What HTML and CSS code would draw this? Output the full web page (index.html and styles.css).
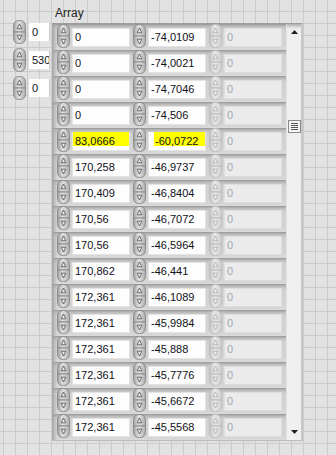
FILE: index.html
```html
<!DOCTYPE html>
<html>
<head>
<meta charset="utf-8">
<link rel="stylesheet" href="styles.css">
</head>
<body>
<svg class="defs" width="0" height="0">
  <defs>
    <linearGradient id="g1" x1="0" y1="0" x2="1" y2="0">
      <stop offset="0" stop-color="#9e9e9e"/>
      <stop offset="0.4" stop-color="#dedede"/>
      <stop offset="0.6" stop-color="#d6d6d6"/>
      <stop offset="1" stop-color="#a8a8a8"/>
    </linearGradient>
    <linearGradient id="g2" x1="0" y1="0" x2="1" y2="0">
      <stop offset="0" stop-color="#c4c4c4"/>
      <stop offset="0.45" stop-color="#e8e8e8"/>
      <stop offset="1" stop-color="#d0d0d0"/>
    </linearGradient>
    <symbol id="sp" viewBox="0 0 13 24">
      <path d="M0.5,12 V6.5 Q0.5,0.5 6.5,0.5 Q12.5,0.5 12.5,6.5 V12 Z" fill="url(#g1)" stroke="#8e8e8e"/>
      <path d="M0.5,12 V17.5 Q0.5,23.5 6.5,23.5 Q12.5,23.5 12.5,17.5 V12 Z" fill="url(#g1)" stroke="#8e8e8e"/>
      <path d="M6.5,4 L4.2,8.8 H8.8 Z" fill="#ededed" stroke="#4a4a4a" stroke-width="0.8"/>
      <path d="M4.2,15.2 H8.8 L6.5,20 Z" fill="#ededed" stroke="#4a4a4a" stroke-width="0.8"/>
    </symbol>
    <symbol id="spd" viewBox="0 0 13 24">
      <path d="M0.5,12 V6.5 Q0.5,0.5 6.5,0.5 Q12.5,0.5 12.5,6.5 V12 Z" fill="url(#g2)" stroke="#bdbdbd"/>
      <path d="M0.5,12 V17.5 Q0.5,23.5 6.5,23.5 Q12.5,23.5 12.5,17.5 V12 Z" fill="url(#g2)" stroke="#bdbdbd"/>
      <path d="M6.5,4 L4.2,8.8 H8.8 Z" fill="#efefef" stroke="#ababab" stroke-width="0.8"/>
      <path d="M4.2,15.2 H8.8 L6.5,20 Z" fill="#efefef" stroke="#ababab" stroke-width="0.8"/>
    </symbol>
  </defs>
</svg>
<div class="page">
  <div class="index-col">
    <div class="idx"><svg class="sp"><use href="#sp"/></svg><div class="ibox">0</div></div>
    <div class="idx"><svg class="sp"><use href="#sp"/></svg><div class="ibox">530</div></div>
    <div class="idx"><svg class="sp"><use href="#sp"/></svg><div class="ibox">0</div></div>
  </div>
  <div class="arr">
    <div class="label">Array</div>
    <div class="frame">
      <div class="rows">
        <div class="row"><svg class="sp"><use href="#sp"/></svg><div class="box">0</div><svg class="sp"><use href="#sp"/></svg><div class="box">-74,0109</div><svg class="sp"><use href="#spd"/></svg><div class="box dis">0</div></div>
        <div class="row"><svg class="sp"><use href="#sp"/></svg><div class="box">0</div><svg class="sp"><use href="#sp"/></svg><div class="box">-74,0021</div><svg class="sp"><use href="#spd"/></svg><div class="box dis">0</div></div>
        <div class="row"><svg class="sp"><use href="#sp"/></svg><div class="box">0</div><svg class="sp"><use href="#sp"/></svg><div class="box">-74,7046</div><svg class="sp"><use href="#spd"/></svg><div class="box dis">0</div></div>
        <div class="row"><svg class="sp"><use href="#sp"/></svg><div class="box">0</div><svg class="sp"><use href="#sp"/></svg><div class="box">-74,506</div><svg class="sp"><use href="#spd"/></svg><div class="box dis">0</div></div>
        <div class="row"><svg class="sp"><use href="#sp"/></svg><div class="box hlbox"><span class="hl">83,0666</span></div><svg class="sp"><use href="#sp"/></svg><div class="box hlbox"><span class="hl hl2">-60,0722</span></div><svg class="sp"><use href="#spd"/></svg><div class="box dis">0</div></div>
        <div class="row"><svg class="sp"><use href="#sp"/></svg><div class="box">170,258</div><svg class="sp"><use href="#sp"/></svg><div class="box">-46,9737</div><svg class="sp"><use href="#spd"/></svg><div class="box dis">0</div></div>
        <div class="row"><svg class="sp"><use href="#sp"/></svg><div class="box">170,409</div><svg class="sp"><use href="#sp"/></svg><div class="box">-46,8404</div><svg class="sp"><use href="#spd"/></svg><div class="box dis">0</div></div>
        <div class="row"><svg class="sp"><use href="#sp"/></svg><div class="box">170,56</div><svg class="sp"><use href="#sp"/></svg><div class="box">-46,7072</div><svg class="sp"><use href="#spd"/></svg><div class="box dis">0</div></div>
        <div class="row"><svg class="sp"><use href="#sp"/></svg><div class="box">170,56</div><svg class="sp"><use href="#sp"/></svg><div class="box">-46,5964</div><svg class="sp"><use href="#spd"/></svg><div class="box dis">0</div></div>
        <div class="row"><svg class="sp"><use href="#sp"/></svg><div class="box">170,862</div><svg class="sp"><use href="#sp"/></svg><div class="box">-46,441</div><svg class="sp"><use href="#spd"/></svg><div class="box dis">0</div></div>
        <div class="row"><svg class="sp"><use href="#sp"/></svg><div class="box">172,361</div><svg class="sp"><use href="#sp"/></svg><div class="box">-46,1089</div><svg class="sp"><use href="#spd"/></svg><div class="box dis">0</div></div>
        <div class="row"><svg class="sp"><use href="#sp"/></svg><div class="box">172,361</div><svg class="sp"><use href="#sp"/></svg><div class="box">-45,9984</div><svg class="sp"><use href="#spd"/></svg><div class="box dis">0</div></div>
        <div class="row"><svg class="sp"><use href="#sp"/></svg><div class="box">172,361</div><svg class="sp"><use href="#sp"/></svg><div class="box">-45,888</div><svg class="sp"><use href="#spd"/></svg><div class="box dis">0</div></div>
        <div class="row"><svg class="sp"><use href="#sp"/></svg><div class="box">172,361</div><svg class="sp"><use href="#sp"/></svg><div class="box">-45,7776</div><svg class="sp"><use href="#spd"/></svg><div class="box dis">0</div></div>
        <div class="row"><svg class="sp"><use href="#sp"/></svg><div class="box">172,361</div><svg class="sp"><use href="#sp"/></svg><div class="box">-45,6672</div><svg class="sp"><use href="#spd"/></svg><div class="box dis">0</div></div>
        <div class="row"><svg class="sp"><use href="#sp"/></svg><div class="box">172,361</div><svg class="sp"><use href="#sp"/></svg><div class="box">-45,5568</div><svg class="sp"><use href="#spd"/></svg><div class="box dis">0</div></div>
      </div>
      <div class="sbar">
        <svg class="arrow up" viewBox="0 0 7 4"><path d="M3.5,0 L7,4 H0 Z" fill="#1e1e1e"/></svg>
        <div class="thumb"><i></i><i></i><i></i><i></i></div>
        <div class="spacer"></div>
        <svg class="arrow down" viewBox="0 0 7 4"><path d="M0,0 H7 L3.5,4 Z" fill="#1e1e1e"/></svg>
      </div>
    </div>
  </div>
</div>
</body>
</html>
```

FILE: styles.css
```css
html, body {
  margin: 0;
  padding: 0;
}
body {
  width: 336px;
  height: 455px;
  overflow: hidden;
  background-color: #e2e2e2;
  background-image:
    linear-gradient(to right, #cbcbcb 1px, transparent 1px),
    linear-gradient(to bottom, #cbcbcb 1px, transparent 1px);
  background-size: 12px 12px;
  background-position: 3px 11px;
  font-family: "Liberation Sans", Arial, sans-serif;
  color: #101018;
}
.defs {
  display: block;
  width: 0;
  height: 0;
  overflow: hidden;
}
.page {
  display: flex;
  align-items: flex-start;
}
.index-col {
  width: 52px;
  box-sizing: border-box;
  padding: 18px 0 0 13px;
  display: flex;
  flex-direction: column;
}
.idx {
  height: 28px;
  display: flex;
  align-items: center;
  gap: 3px;
}
.sp {
  width: 13px;
  height: 24px;
  flex: none;
  display: block;
}
.ibox {
  width: 21px;
  height: 18px;
  box-sizing: border-box;
  background: #fff;
  border-right: 1px solid #c8c8c8;
  padding-left: 3px;
  font-size: 11px;
  line-height: 18px;
  white-space: nowrap;
  overflow: hidden;
}
.arr {
  width: 251px;
  display: flex;
  flex-direction: column;
}
.label {
  height: 23px;
  box-sizing: border-box;
  padding: 6px 0 0 3px;
  font-size: 12px;
  line-height: 14px;
  color: #262626;
}
.frame {
  display: flex;
  border-top: 1px solid #9c9c9c;
  border-right: 2px solid #c6c6c6;
  border-bottom: 1px solid #bcbcbc;
}
.rows {
  width: 234px;
  display: flex;
  flex-direction: column;
}
.row {
  height: 26px;
  box-sizing: border-box;
  padding-left: 5px;
  display: flex;
  align-items: flex-start;
  background:
    linear-gradient(to right, #a6a6a6 0, rgba(210,210,210,0) 5px),
    linear-gradient(to bottom, #969696 0, #b8b8b8 2px, #c9c9c9 4px, #d1d1d1 6px, #d4d4d4 22px, #dadada 26px);
}
.box {
  width: 58px;
  height: 19px;
  flex: none;
  box-sizing: border-box;
  margin: 4px 3px 0 2px;
  background: #fdfdfd;
  border: 1px solid #e4e4e4;
  padding-left: 2px;
  font-size: 11px;
  line-height: 17px;
  white-space: nowrap;
  overflow: hidden;
}
.box.dis {
  background: #ebebeb;
  border-color: #dedede;
  color: #a5a5b8;
}
.box.hlbox {
  padding-left: 0;
  border-top: 0;
}
.hl {
  display: block;
  height: 14px;
  background: #ffff00;
  padding-left: 2px;
  line-height: 18px;
  overflow: visible;
}
.hl2 {
  margin-left: 5px;
  padding-left: 1px;
}
.sbar {
  width: 15px;
  height: 416px;
  display: flex;
  flex-direction: column;
  align-items: center;
  background: linear-gradient(to bottom, #acacac 0, #dadada 3px, #efefef 5px, #f0f0f0 100%);
  border-left: 1px solid #e2e2e2;
  box-sizing: border-box;
}
.arrow {
  width: 7px;
  height: 4px;
  display: block;
  flex: none;
}
.arrow.up {
  margin-top: 6px;
}
.arrow.down {
  margin-bottom: 6px;
}
.thumb {
  width: 13px;
  height: 13px;
  box-sizing: border-box;
  margin-top: 86px;
  border: 1px solid #8a8a8a;
  background: #f6f6f6;
  display: flex;
  flex-direction: column;
  align-items: center;
  justify-content: center;
  gap: 1px;
}
.thumb i {
  display: block;
  width: 7px;
  height: 1px;
  background: #555;
}
.spacer {
  flex: 1;
}
```
